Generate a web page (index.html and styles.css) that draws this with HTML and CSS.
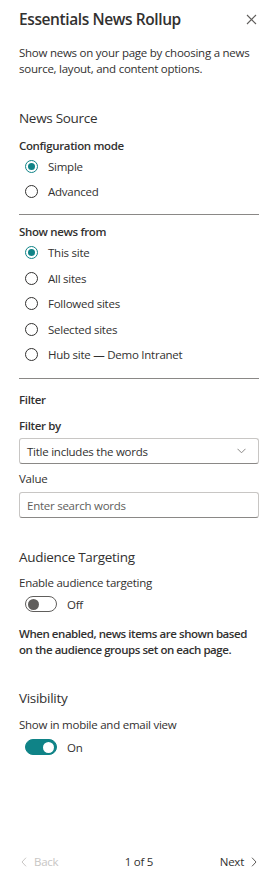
FILE: index.html
```html
<!DOCTYPE html>
<html lang="en">
<head>
<meta charset="utf-8">
<title>Essentials News Rollup</title>
<link rel="stylesheet" href="styles.css">
</head>
<body>
<div class="panel">
  <header class="panel-header">
    <h1 class="panel-title">Essentials News Rollup</h1>
    <button class="close-btn" aria-label="Close">
      <svg width="11" height="11" viewBox="0 0 11 11"><path d="M1 1 L10 10 M10 1 L1 10" stroke="#605e5c" stroke-width="1.1" fill="none"/></svg>
    </button>
  </header>
  <p class="intro">Show news on your page by choosing a news source, layout, and content options.</p>

  <h2 class="section-title">News Source</h2>
  <div class="field-label">Configuration mode</div>
  <div class="radio-group">
    <div class="radio-row"><span class="radio checked"></span><span>Simple</span></div>
    <div class="radio-row"><span class="radio"></span><span>Advanced</span></div>
  </div>
  <hr class="divider">
  <div class="field-label label-after-divider">Show news from</div>
  <div class="radio-group tall">
    <div class="radio-row"><span class="radio checked"></span><span>This site</span></div>
    <div class="radio-row"><span class="radio"></span><span>All sites</span></div>
    <div class="radio-row"><span class="radio"></span><span>Followed sites</span></div>
    <div class="radio-row"><span class="radio"></span><span>Selected sites</span></div>
    <div class="radio-row"><span class="radio"></span><span>Hub site — Demo Intranet</span></div>
  </div>
  <hr class="divider divider-2">
  <div class="field-label filter-head">Filter</div>
  <div class="field-label filter-by">Filter by</div>
  <div class="dropdown">
    <span>Title includes the words</span>
    <svg width="9" height="6" viewBox="0 0 9 6"><path d="M0.5 0.8 L4.5 4.8 L8.5 0.8" stroke="#8a8886" stroke-width="1" fill="none"/></svg>
  </div>
  <div class="plain-label value-label">Value</div>
  <div class="textbox"><span class="placeholder">Enter search words</span></div>

  <h2 class="section-title audience">Audience Targeting</h2>
  <div class="plain-label">Enable audience targeting</div>
  <div class="toggle-row"><span class="toggle off"><span class="knob"></span></span><span>Off</span></div>
  <p class="note">When enabled, news items are shown based on the audience groups set on each page.</p>

  <h2 class="section-title visibility">Visibility</h2>
  <div class="plain-label">Show in mobile and email view</div>
  <div class="toggle-row"><span class="toggle on"><span class="knob"></span></span><span>On</span></div>

  <footer class="pager">
    <span class="pager-back">
      <svg width="6" height="10" viewBox="0 0 6 10"><path d="M5 0.7 L1 5 L5 9.3" stroke="#c8c6c4" stroke-width="1" fill="none"/></svg>
      <span>Back</span>
    </span>
    <span class="pager-count">1 of 5</span>
    <span class="pager-next">
      <span>Next</span>
      <svg width="6" height="10" viewBox="0 0 6 10"><path d="M1 0.7 L5 5 L1 9.3" stroke="#605e5c" stroke-width="1" fill="none"/></svg>
    </span>
  </footer>
</div>
</body>
</html>
```

FILE: styles.css
```css
* { box-sizing: border-box; }
html, body { margin: 0; padding: 0; background: #ffffff; }
body {
  font-family: "Open Sans", "Noto Sans", "Liberation Sans", sans-serif;
  color: #323130;
  font-size: 11.5px;
  letter-spacing: -0.25px;
}
.panel {
  width: 276px;
  height: 886px;
  padding: 8px 17px 0 19px;
  display: flex;
  flex-direction: column;
}
.panel-header {
  display: flex;
  justify-content: space-between;
  align-items: center;
  height: 22px;
}
.panel-title {
  margin: 0;
  font-size: 15.5px;
  font-weight: 600;
  line-height: 22px;
  letter-spacing: -0.4px;
  color: #323130;
}
.close-btn {
  border: 0;
  background: none;
  padding: 0;
  margin-right: 2px;
  width: 11px;
  height: 11px;
  display: flex;
}
.intro {
  margin: 15px 0 0;
  line-height: 16px;
}
.section-title {
  margin: 31px 0 0;
  font-size: 13.5px;
  font-weight: 400;
  line-height: 20px;
  letter-spacing: -0.3px;
}
.field-label {
  margin-top: 10px;
  line-height: 16px;
  font-weight: 600;
  letter-spacing: -0.35px;
}
.label-after-divider { margin-top: 9px; }
.radio-group { display: flex; flex-direction: column; }
.radio-row {
  height: 25px;
  display: flex;
  align-items: center;
  padding-left: 6px;
  gap: 10px;
}
.tall .radio-row { height: 25.5px; }
.radio {
  width: 13px;
  height: 13px;
  border-radius: 50%;
  border: 1px solid #323130;
  flex: none;
  display: flex;
  align-items: center;
  justify-content: center;
}
.radio.checked { border-color: #0f8387; }
.radio.checked::after {
  content: "";
  width: 7px;
  height: 7px;
  border-radius: 50%;
  background: #0f8387;
}
.divider {
  margin: 10px 0 0;
  border: 0;
  border-top: 1px solid #8a8886;
  height: 0;
}
.divider-2 { margin-top: 10.5px; }
.filter-head { margin-top: 13px; }
.filter-by { margin-top: 10px; }
.dropdown {
  margin-top: 4px;
  height: 26px;
  border: 1px solid #c8c6c4;
  border-bottom-color: #8a8886;
  border-radius: 3px;
  display: flex;
  align-items: center;
  justify-content: space-between;
  padding: 0 12px 0 7px;
}
.textbox {
  margin-top: 5px;
  height: 26px;
  border: 1px solid #c8c6c4;
  border-bottom-color: #8a8886;
  border-radius: 3px;
  display: flex;
  align-items: center;
  padding: 0 7px;
}
.placeholder { color: #605e5c; }
.audience { margin-top: 29px; }
.visibility { margin-top: 30px; }
.plain-label {
  margin-top: 8px;
  line-height: 16px;
}
.plain-label.value-label { margin-top: 7px; }
.toggle-row {
  margin-top: 3px;
  height: 20px;
  display: flex;
  align-items: center;
  padding-left: 6px;
  gap: 10px;
}
.visibility + .plain-label { margin-top: 9px; }
.visibility + .plain-label + .toggle-row { margin-top: 4px; }
.toggle {
  width: 32px;
  height: 16px;
  border-radius: 8px;
  display: flex;
  align-items: center;
  padding: 0 2px;
  flex: none;
}
.toggle .knob {
  width: 11px;
  height: 11px;
  border-radius: 50%;
}
.toggle.off { border: 1px solid #605e5c; background: #fff; }
.toggle.off .knob { background: #605e5c; }
.toggle.on { background: #0f8387; justify-content: flex-end; border: 1px solid #0f8387; }
.toggle.on .knob { background: #fff; }
.note {
  margin: 12px 0 0;
  line-height: 16px;
  font-weight: 600;
  letter-spacing: -0.45px;
}
.pager {
  margin-top: auto;
  margin-left: 2px;
  margin-right: 2px;
  padding-bottom: 16px;
  display: grid;
  grid-template-columns: 1fr auto 1fr;
  align-items: center;
  line-height: 16px;
}
.pager-back {
  display: flex;
  align-items: center;
  gap: 7px;
  color: #c8c6c4;
}
.pager-count { text-align: center; }
.pager-next {
  display: flex;
  align-items: center;
  justify-content: flex-end;
  gap: 7px;
}
```
